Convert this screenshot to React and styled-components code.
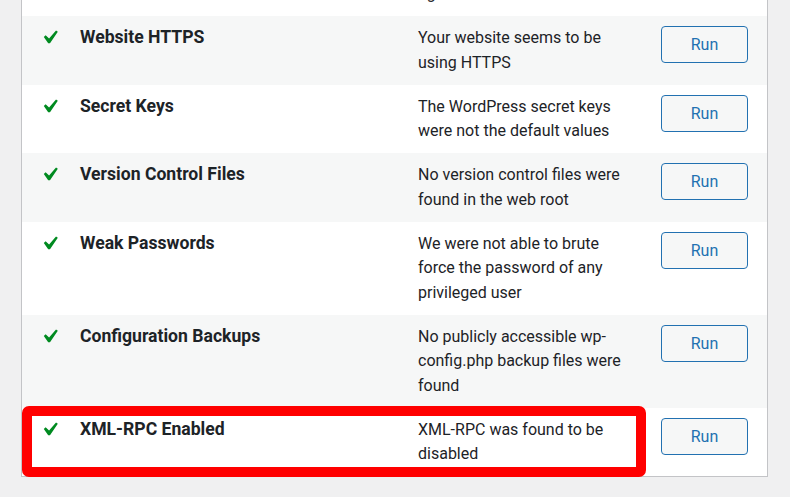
import styled, { createGlobalStyle } from "styled-components";

const GlobalStyle = createGlobalStyle`
  html, body {
    margin: 0;
    padding: 0;
    background: #f0f0f1;
  }
  body {
    font-family: Roboto, "Noto Sans", "Liberation Sans", sans-serif;
    color: #1d2327;
  }
`;

const checks = [
  {
    title: "Brute Force Protection",
    desc: "Login page is protected against attacks",
  },
  { title: "Website HTTPS", desc: "Your website seems to be using HTTPS" },
  {
    title: "Secret Keys",
    desc: "The WordPress secret keys were not the default values",
  },
  {
    title: "Version Control Files",
    desc: "No version control files were found in the web root",
  },
  {
    title: "Weak Passwords",
    desc: "We were not able to brute force the password of any privileged user",
  },
  {
    title: "Configuration Backups",
    desc: "No publicly accessible wp-config.php backup files were found",
  },
  {
    title: "XML-RPC Enabled",
    desc: "XML-RPC was found to be disabled",
    highlight: true,
  },
];

const CheckIcon = () => (
  <SCIcon viewBox="0 0 20 20" aria-hidden="true">
    <path d="M14.83 4.89l1.34.94-5.81 8.38H9.02L5.78 9.67l1.34-1.25 2.57 2.4z" />
  </SCIcon>
);

const App = () => {
  return (
    <SCPage>
      <GlobalStyle />
      <SCTable>
        {checks.map((check, i) => (
          <SCRow key={check.title} $striped={i % 2 === 1}>
            <SCIconCell>
              <CheckIcon />
            </SCIconCell>
            <SCTitle>{check.title}</SCTitle>
            <SCDesc>{check.desc}</SCDesc>
            <SCActions>
              <SCButton type="button">Run</SCButton>
            </SCActions>
            {check.highlight && <SCHighlight />}
          </SCRow>
        ))}
      </SCTable>
    </SCPage>
  );
};

export default App;

const SCPage = styled.div`
  height: 497px;
  overflow: hidden;
  background: #f0f0f1;
`;

const SCTable = styled.div`
  margin: -53.5px 0 0 21px;
  width: 747px;
  box-sizing: border-box;
  border: 1px solid #c3c4c7;
  background: #fff;
`;

const SCRow = styled.div`
  position: relative;
  display: grid;
  grid-template-columns: 58px 338px 215px auto;
  align-items: start;
  padding: 10px 0 9.5px;
  background: ${(props) => (props.$striped ? "#f6f7f7" : "#fff")};
  font-size: 16px;
  line-height: 24.5px;
`;

const SCIconCell = styled.div`
  padding-left: 14px;
`;

const SCIcon = styled.svg`
  display: block;
  width: 27px;
  height: 27px;
  margin-top: -1.6px;
  fill: #008a20;
`;

const SCTitle = styled.div`
  font-size: 17.6px;
  font-weight: 700;
  color: #1d2327;
  margin-top: -0.6px;
`;

const SCDesc = styled.div`
  color: #1d2327;
`;

const SCActions = styled.div`
  padding-left: 28px;
`;

const SCButton = styled.button`
  display: block;
  width: 87px;
  height: 37px;
  padding: 0;
  border: 1px solid #2271b1;
  border-radius: 4px;
  background: #f6f7f7;
  color: #2271b1;
  font-family: inherit;
  font-size: 16px;
  cursor: pointer;
`;

const SCHighlight = styled.div`
  position: absolute;
  top: -1.5px;
  left: 0;
  width: 624px;
  bottom: -1px;
  box-sizing: border-box;
  border: 10px solid #ff0000;
  border-radius: 7px;
  pointer-events: none;
`;
